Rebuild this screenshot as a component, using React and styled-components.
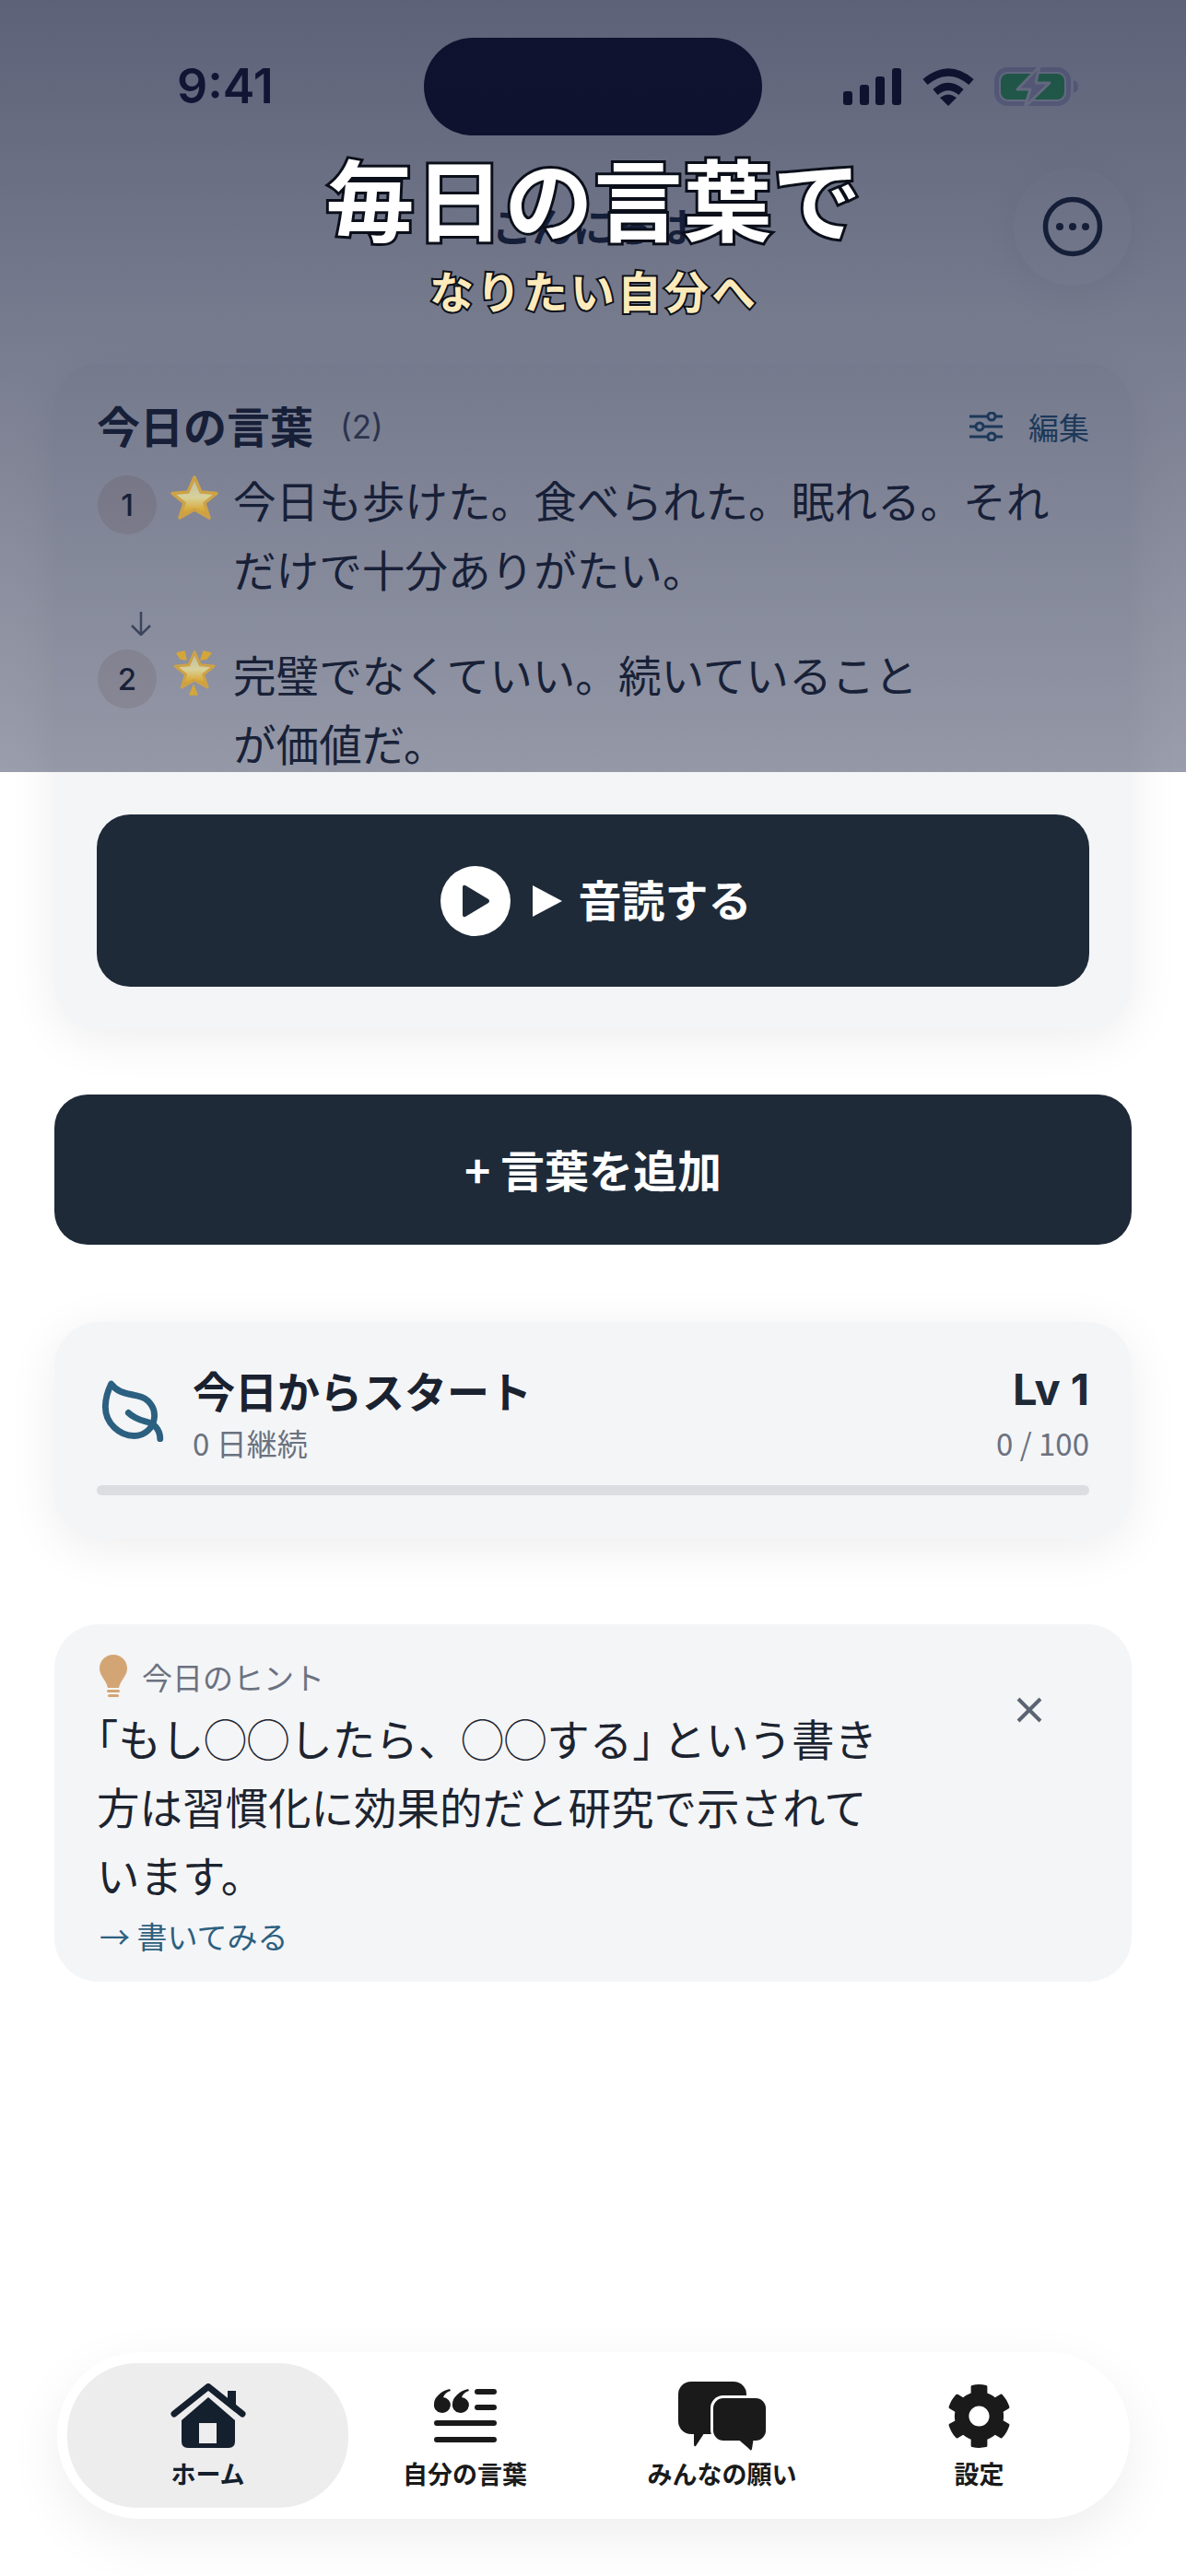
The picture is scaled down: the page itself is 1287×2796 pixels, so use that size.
import React from 'react';
import styled, { createGlobalStyle } from 'styled-components';
import { Leaf } from 'lucide-react';
import { FaCog } from 'react-icons/fa';

const Global = createGlobalStyle`
  html, body { margin: 0; padding: 0; background: #fff; }
  * { box-sizing: border-box; }
`;

const SANS = `Inter, "Noto Sans CJK JP", "Noto Sans", sans-serif`;
const CJK = `"Noto Sans CJK JP", "Noto Sans", sans-serif`;
const NAVY = '#1e2a38';
const TEAL = '#2c6080';

const Screen = styled.div`
  position: relative;
  width: 1287px;
  height: 2796px;
  overflow: hidden;
  background: #fff;
  font-family: ${CJK};
`;

const Scrim = styled.div`
  position: absolute;
  inset: 0 0 auto 0;
  height: 838px;
  z-index: 2;
  background: linear-gradient(180deg, rgba(15, 23, 56, 0.68) 0%, rgba(15, 23, 56, 0.42) 100%);
`;

const Hero = styled.div`
  position: absolute;
  top: 153px;
  left: 2px;
  right: 0;
  z-index: 3;
  display: flex;
  flex-direction: column;
  align-items: center;
`;

const HeroTitle = styled.div`
  font-size: 96px;
  line-height: 120px;
  font-weight: 700;
  letter-spacing: 1px;
  color: #fff;
  -webkit-text-stroke: 6px #0b0f1a;
  paint-order: stroke fill;
`;

const HeroSub = styled.div`
  margin-top: 11px;
  font-size: 48px;
  line-height: 60px;
  font-weight: 700;
  letter-spacing: 3px;
  color: #fdeabb;
  -webkit-text-stroke: 4px #0b0f1a;
  paint-order: stroke fill;
`;

const StatusBar = styled.div`
  display: flex;
  align-items: center;
  height: 106px;
  margin-top: 41px;
`;

const Clock = styled.div`
  width: 460px;
  padding-left: 192px;
  font-family: ${SANS};
  font-size: 52px;
  font-weight: 600;
  line-height: 106px;
  color: #12122a;
`;

const Island = styled.div`
  width: 367px;
  height: 106px;
  border-radius: 53px;
  background: #0c0a1e;
`;

const StatusIcons = styled.div`
  display: flex;
  align-items: center;
  gap: 22px;
  padding-left: 88px;
`;

const TopRow = styled.div`
  position: relative;
  display: flex;
  justify-content: center;
  align-items: center;
  height: 128px;
  margin: 35px 59px 0;
`;

const Greeting = styled.div`
  font-size: 44px;
  font-weight: 700;
  color: #1e2a38;
  transform: translateY(-2px);
`;

const MenuButton = styled.div`
  position: absolute;
  right: 0;
  top: 0;
  display: flex;
  align-items: center;
  justify-content: center;
  width: 128px;
  height: 128px;
  border-radius: 50%;
  background: #fff;
  box-shadow: 0 6px 48px rgba(0, 0, 0, 0.07);
`;

const Column = styled.div`
  display: flex;
  flex-direction: column;
  margin: 85px 59px 0;
`;

const Panel = styled.section`
  display: flex;
  flex-direction: column;
  background: #f4f5f7;
  border-radius: 48px;
  padding: ${p => p.$pad};
  margin-bottom: ${p => p.$after}px;
  box-shadow: ${p => (p.$flat ? 'none' : '0 10px 54px rgba(0, 0, 0, 0.075)')};
`;

const PanelHead = styled.div`
  display: flex;
  align-items: center;
  height: 44px;
  margin-bottom: 22px;
`;

const PanelTitle = styled.h2`
  margin: -6px 0 0;
  font-size: 47px;
  font-weight: 700;
  color: #1f2937;
`;

const Count = styled.span`
  margin-left: 29px;
  font-family: ${SANS};
  font-size: 35px;
  color: #4b5568;
`;

const EditLink = styled.div`
  display: flex;
  align-items: center;
  gap: 28px;
  margin-left: auto;
  font-size: 33px;
  color: ${TEAL};
`;

const Item = styled.div`
  display: flex;
  align-items: flex-start;
`;

const Badge = styled.div`
  flex: none;
  display: flex;
  align-items: center;
  justify-content: center;
  width: 64px;
  height: 64px;
  margin: 9px 15px 0 1px;
  border-radius: 50%;
  background: #e6dedc;
  font-family: ${SANS};
  font-size: 33px;
  font-weight: 500;
  color: #1f2937;
`;

/* The star sits above the header scrim, so it keeps its own colour. */
const StarSlot = styled.div`
  position: relative;
  z-index: 3;
  flex: none;
  width: 50px;
  height: 52px;
  margin: 9px 18px 0 0;
`;

const Verse = styled.p`
  margin: -3px 0 3px;
  font-size: 46.6px;
  line-height: 75px;
  color: #1f2937;
  white-space: nowrap;
`;

const ArrowRow = styled.div`
  display: flex;
  height: 39px;
  padding: 7px 0 0 37px;
`;

const DarkButton = styled.div`
  display: flex;
  align-items: center;
  justify-content: center;
  height: ${p => p.$h}px;
  margin-top: ${p => p.$top || 0}px;
  margin-bottom: ${p => p.$after || 0}px;
  padding-left: ${p => p.$shift || 0}px;
  border-radius: 36px;
  background: ${NAVY};
  color: #fff;
  font-size: ${p => p.$size}px;
  font-weight: 700;
`;

const ButtonLabel = styled.span`
  margin-bottom: ${p => p.$lift}px;
`;

const PlayDisc = styled.div`
  display: flex;
  align-items: center;
  justify-content: center;
  width: 76px;
  height: 76px;
  margin-right: 24px;
  border-radius: 50%;
  background: #fff;
`;

const PlayGlyph = styled.svg`
  margin-right: 18px;
`;

const StreakRow = styled.div`
  display: flex;
  align-items: center;
`;

const LeafMark = styled(Leaf)`
  flex: none;
  width: 75px;
  height: 75px;
  margin: 0 29px 0 0;
  transform: scaleX(-1);
  color: ${TEAL};
`;

const StreakText = styled.div`
  flex: 1;
`;

const StreakTitle = styled.div`
  margin: -3px 0 2px;
  font-size: 46px;
  line-height: 66px;
  font-weight: 700;
  color: #1a2230;
`;

const Muted = styled.div`
  font-size: 33px;
  line-height: 46px;
  color: #6b7280;
`;

const StreakLevel = styled.div`
  text-align: right;
`;

const LevelText = styled.div`
  margin: -3px 0 2px;
  font-family: ${SANS};
  font-size: 47px;
  line-height: 66px;
  font-weight: 700;
  color: ${NAVY};
`;

const Meter = styled.div`
  height: 11px;
  margin-top: 23px;
  border-radius: 6px;
  background: #dcdde0;
`;

const HintCard = styled(Panel)`
  position: relative;
`;

const HintHead = styled.div`
  display: flex;
  align-items: center;
  gap: 16px;
  height: 48px;
  padding-left: 3px;
`;

const HintBody = styled.p`
  margin: 5px 0 1px;
  font-size: 46.5px;
  line-height: 74px;
  color: #1c2430;
  white-space: nowrap;
`;

const Bracket = styled.span`
  font-feature-settings: "halt";
  margin-right: ${p => p.$gap || 0}px;
`;

const CloseMark = styled.svg`
  position: absolute;
  top: 78px;
  right: 96px;
`;

const HintLink = styled.div`
  display: flex;
  align-items: center;
  gap: 12px;
  margin-top: 6px;
  font-size: 33px;
  line-height: 46px;
  color: ${TEAL};
  padding-left: 3px;
`;

const TabBar = styled.nav`
  position: absolute;
  left: 62px;
  top: 2553px;
  width: 1164px;
  height: 181px;
  display: grid;
  grid-template-columns: repeat(4, 279px);
  padding: 12px 24px;
  background: #fff;
  border-radius: 90px;
  box-shadow: 0 20px 60px rgba(0, 0, 0, 0.07);
`;

const Tab = styled.div`
  display: flex;
  flex-direction: column;
  align-items: center;
  margin: ${p => (p.$active ? '0 -13px' : '0')};
  border-radius: 76px;
  background: ${p => (p.$active ? '#ededed' : 'transparent')};
  color: ${p => (p.$active ? '#14202e' : '#1a1a1a')};
`;

const TabIcon = styled.div`
  display: flex;
  align-items: center;
  justify-content: center;
  height: 76px;
  margin-top: 19px;
`;

const TabLabel = styled.div`
  margin-top: 7px;
  font-size: 27px;
  line-height: 36px;
  font-weight: 700;
`;

const Signal = () => (
  <svg width="64" height="40" viewBox="0 0 64 40" fill="#0c0a1e">
    <rect x="0" y="25" width="10" height="15" rx="3" />
    <rect x="18" y="18" width="10" height="22" rx="3" />
    <rect x="35" y="9" width="10" height="31" rx="3" />
    <rect x="53" y="0" width="10" height="40" rx="3" />
  </svg>
);

const Wifi = () => (
  <svg width="56" height="41" viewBox="0 0 56 41">
    <g fill="none" stroke="#0c0a1e" strokeWidth="8">
      <path d="M3 15 Q28 -6 53 15" />
      <path d="M14 26 Q28 14 42 26" />
    </g>
    <path d="M19 32 Q28 25 37 32 L28 41 Z" fill="#0c0a1e" />
  </svg>
);

const Battery = () => (
  <svg width="91" height="42" viewBox="0 0 91 42" overflow="visible">
    <rect x="2.5" y="2.5" width="78" height="37" rx="12" fill="none" stroke="#cfcde6" strokeWidth="5" />
    <rect x="7" y="7" width="69" height="28" rx="8" fill="#3ecb66" />
    <path d="M86 14 q5 2 5 7 t-5 7z" fill="#cfcde6" />
    <path d="M49 -1 L25 24 H39 L33 43 L60 17 H45 Z" fill="#cfcde6" stroke="#fff" strokeWidth="3" strokeLinejoin="round" />
  </svg>
);

const Dots = () => (
  <svg width="66" height="66" viewBox="0 0 66 66" fill="#1e2a38">
    <circle cx="33" cy="33" r="29.5" fill="none" stroke="#1e2a38" strokeWidth="5.5" />
    <circle cx="19" cy="33" r="4" />
    <circle cx="33" cy="33" r="4" />
    <circle cx="47" cy="33" r="4" />
  </svg>
);

const Sliders = () => (
  <svg width="36" height="32" viewBox="0 0 36 32" fill="none" stroke={TEAL} strokeWidth="3">
    <path d="M0 5H36M0 16H36M0 27H36" />
    <circle cx="24" cy="5" r="4" fill="#f4f5f7" />
    <circle cx="11" cy="16" r="4" fill="#f4f5f7" />
    <circle cx="24" cy="27" r="4" fill="#f4f5f7" />
  </svg>
);

const STAR = 'M26 2 L33 18 L50 19.500 L37 30 L42 46 L26 37 L10 46 L15 30 L2 19.500 L19 18 Z';

const Star = ({ id, sparkle }) => (
  <svg width="52" height="52" viewBox="0 0 52 52">
    <defs>
      <linearGradient id={id} x1="0" y1="0" x2="0" y2="1">
        <stop offset="0" stopColor="#b9bcae" />
        <stop offset="0.5" stopColor="#d8d199" />
        <stop offset="0.8" stopColor="#d9ab3c" />
        <stop offset="1" stopColor="#c98f28" />
      </linearGradient>
    </defs>
    {sparkle ? (
      <>
        <g transform="translate(3.500 1) scale(0.87)">
          <path d={STAR} fill={`url(#${id})`} stroke="#cda247" strokeWidth="3.500" strokeLinejoin="round" />
        </g>
        <path
          d="M7 4 L15 2 L17 11 L11 10 Z M44 4 L36 2 L33 11 L39 10 Z M25 39 L29 49 H21 Z"
          fill="#d4a63a"
          stroke="#d4a63a"
          strokeWidth="1.500"
          strokeLinejoin="round"
        />
      </>
    ) : (
      <path d={STAR} fill={`url(#${id})`} stroke="#cda247" strokeWidth="3.500" strokeLinejoin="round" />
    )}
  </svg>
);

const DownArrow = () => (
  <svg width="22" height="26" viewBox="0 0 22 26" fill="none" stroke="#636b80" strokeWidth="2.5">
    <path d="M11 0V25M1 15L11 25L21 15" />
  </svg>
);

const Bulb = () => (
  <svg width="30" height="48" viewBox="0 0 30 48" fill="#d4a574">
    <path d="M15 0 C24 0 30 7 30 15 C30 23 23 27 21 36 H9 C7 27 0 23 0 15 C0 7 6 0 15 0 Z" />
    <rect x="8" y="38" width="14" height="3" rx="1.5" />
    <rect x="9" y="43" width="12" height="3" rx="1.5" />
  </svg>
);

const HomeIcon = () => (
  <svg width="82" height="71" viewBox="0 0 82 71">
    <path d="M62 8 H71 V30 L62 22 Z" fill="#14202e" />
    <path d="M4 33 L41 3.500 L78 33" fill="none" stroke="#14202e" strokeWidth="7" strokeLinecap="round" strokeLinejoin="round" />
    <path d="M12 40 L41 15 L70 40 V63 Q70 70 63 70 H19 Q12 70 12 63 Z" fill="#14202e" />
    <rect x="31" y="43" width="19" height="22" fill="#ededed" />
  </svg>
);

const QuoteIcon = () => (
  <svg width="68" height="58" viewBox="0 0 68 58" fill="#1a1a1a">
    <path d="M17 0 C8 2 0 9 0 16 a9 8.500 0 1 0 10 -7 C11 6 14 3 18 2 Z" />
    <path d="M37 0 C28 2 20 9 20 16 a9 8.500 0 1 0 10 -7 C31 6 34 3 38 2 Z" />
    <rect x="44" y="0" width="24" height="6" rx="3" />
    <rect x="44" y="17" width="24" height="6" rx="3" />
    <rect x="0" y="34" width="68" height="6" rx="3" />
    <rect x="0" y="52" width="68" height="6" rx="3" />
  </svg>
);

const ChatIcon = () => (
  <svg width="95" height="75" viewBox="0 0 95 75" fill="#1a1a1a">
    <rect x="0" y="0" width="74" height="57" rx="14" />
    <path d="M17 50 H32 L19 70 Q17 71 17 68 Z" />
    <rect x="35" y="15" width="62" height="51" rx="14" fill="#fff" />
    <rect x="38" y="18" width="57" height="46" rx="11" />
    <path d="M62 60 H82 L80 73 Q79 76 77 73 Z" />
  </svg>
);

export default function App() {
  return (
    <Screen>
      <Global />

      <StatusBar>
        <Clock>9:41</Clock>
        <Island />
        <StatusIcons>
          <Signal />
          <Wifi />
          <Battery />
        </StatusIcons>
      </StatusBar>

      <TopRow>
        <Greeting>こんにちは</Greeting>
        <MenuButton>
          <Dots />
        </MenuButton>
      </TopRow>

      <Column>
        <Panel $pad="46px 46px 46px" $after={71}>
          <PanelHead>
            <PanelTitle>今日の言葉</PanelTitle>
            <Count>(2)</Count>
            <EditLink>
              <Sliders />
              編集
            </EditLink>
          </PanelHead>

          <Item>
            <Badge>1</Badge>
            <StarSlot>
              <Star id="star-plain" />
            </StarSlot>
            <Verse>
              今日も歩けた。食べられた。眠れる。それ
              <br />
              だけで十分ありがたい。
            </Verse>
          </Item>

          <ArrowRow>
            <DownArrow />
          </ArrowRow>

          <Item>
            <Badge>2</Badge>
            <StarSlot>
              <Star id="star-glow" sparkle />
            </StarSlot>
            <Verse>
              完璧でなくていい。続いていること
              <br />
              が価値だ。
            </Verse>
          </Item>

          <DarkButton $h={187} $top={38} $size={47} $shift={6}>
            <PlayDisc>
              <svg width="32" height="36" viewBox="0 0 32 36">
                <path d="M2 3 Q2 0 5 1 L30 16 Q32 18 30 20 L5 35 Q2 36 2 33 Z" fill={NAVY} />
              </svg>
            </PlayDisc>
            <PlayGlyph width="32" height="34" viewBox="0 0 32 34">
              <path d="M0 0 L32 17 L0 34 Z" fill="#fff" />
            </PlayGlyph>
            <ButtonLabel $lift={6}>音読する</ButtonLabel>
          </DarkButton>
        </Panel>

        <DarkButton $h={163} $after={84} $size={48}>
          <ButtonLabel $lift={3}>+ 言葉を追加</ButtonLabel>
        </DarkButton>

        <Panel $pad="43px 46px 47px" $after={93}>
          <StreakRow>
            <LeafMark strokeWidth={2.2} />
            <StreakText>
              <StreakTitle>今日からスタート</StreakTitle>
              <Muted>0 日継続</Muted>
            </StreakText>
            <StreakLevel>
              <LevelText>Lv 1</LevelText>
              <Muted>0 / 100</Muted>
            </StreakLevel>
          </StreakRow>
          <Meter />
        </Panel>

        <HintCard $flat $pad="33px 46px 27px" $after={0}>
          <HintHead>
            <Bulb />
            <Muted>今日のヒント</Muted>
          </HintHead>
          <HintBody>
            <Bracket>「</Bracket>もし◯◯したら、◯◯する<Bracket $gap={10}>」</Bracket>という書き
            <br />
            方は習慣化に効果的だと研究で示されて
            <br />
            います。
          </HintBody>
          <CloseMark width="30" height="30" viewBox="0 0 30 30" fill="none" stroke="#5b6472" strokeWidth="4">
            <path d="M3 3L27 27M27 3L3 27" />
          </CloseMark>
          <HintLink>→ 書いてみる</HintLink>
        </HintCard>
      </Column>

      <Scrim />

      <Hero>
        <HeroTitle>毎日の言葉で</HeroTitle>
        <HeroSub>なりたい自分へ</HeroSub>
      </Hero>

      <TabBar>
        <Tab $active>
          <TabIcon>
            <HomeIcon />
          </TabIcon>
          <TabLabel>ホーム</TabLabel>
        </Tab>
        <Tab>
          <TabIcon>
            <QuoteIcon />
          </TabIcon>
          <TabLabel>自分の言葉</TabLabel>
        </Tab>
        <Tab>
          <TabIcon>
            <ChatIcon />
          </TabIcon>
          <TabLabel>みんなの願い</TabLabel>
        </Tab>
        <Tab>
          <TabIcon>
            <FaCog size={71} />
          </TabIcon>
          <TabLabel>設定</TabLabel>
        </Tab>
      </TabBar>
    </Screen>
  );
}
